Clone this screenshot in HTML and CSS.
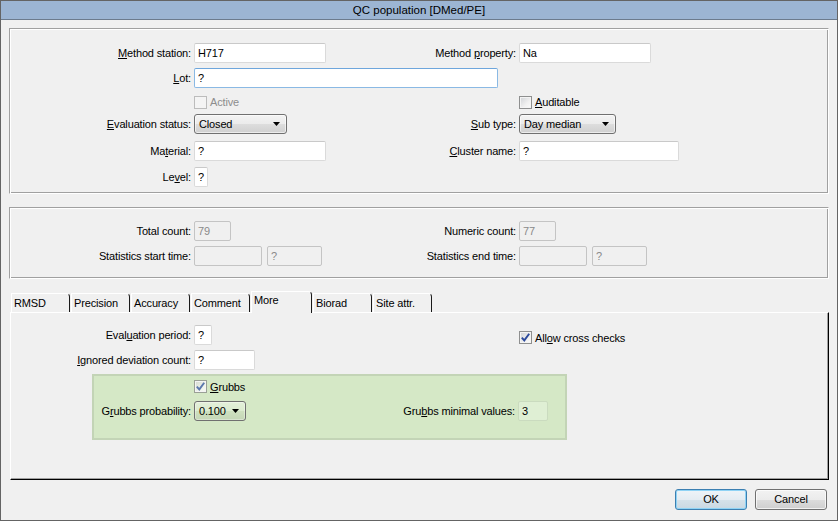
FILE: index.html
```html
<!DOCTYPE html>
<html>
<head>
<meta charset="utf-8">
<title>QC population [DMed/PE]</title>
<link rel="stylesheet" href="styles.css">
</head>
<body>
<div class="window">
  <div class="titlebar">QC population [DMed/PE]</div>
  <div class="client">

    <div class="panel panel-main">
      <div class="grid grid-main">
        <span class="lbl"><u>M</u>ethod station:</span>
        <span class="inp w132">H717</span>
        <span class="lbl">Method <u>p</u>roperty:</span>
        <span class="inp w132">Na</span>

        <span class="lbl"><u>L</u>ot:</span>
        <span class="inp focus w304 span3">?</span>

        <span></span>
        <span class="chk disabled"><span class="cb"></span><span>Active</span></span>
        <span></span>
        <span class="chk"><span class="cb"></span><span><u>A</u>uditable</span></span>

        <span class="lbl"><u>E</u>valuation status:</span>
        <span class="select w93"><span>Closed</span><svg class="arrow" width="7" height="4" viewBox="0 0 7 4"><path d="M0 0H7L3.5 4Z" fill="#000"/></svg></span>
        <span class="lbl"><u>S</u>ub type:</span>
        <span class="select w97"><span>Day median</span><svg class="arrow" width="7" height="4" viewBox="0 0 7 4"><path d="M0 0H7L3.5 4Z" fill="#000"/></svg></span>

        <span class="lbl">Ma<u>t</u>erial:</span>
        <span class="inp w132">?</span>
        <span class="lbl"><u>C</u>luster name:</span>
        <span class="inp w160">?</span>

        <span class="lbl">Le<u>v</u>el:</span>
        <span class="inp w14">?</span>
        <span></span>
        <span></span>
      </div>
    </div>

    <div class="panel panel-stats">
      <div class="grid grid-stats">
        <span class="lbl">Total count:</span>
        <span class="inp dis w37">79</span>
        <span class="lbl">Numeric count:</span>
        <span class="inp dis w37">77</span>

        <span class="lbl">Statistics start time:</span>
        <span class="pair"><span class="inp dis w68"></span><span class="inp dis w55">?</span></span>
        <span class="lbl">Statistics end time:</span>
        <span class="pair"><span class="inp dis w68"></span><span class="inp dis w55">?</span></span>
      </div>
    </div>

    <div class="tabs">
      <span class="tab">RMSD</span>
      <span class="tab">Precision</span>
      <span class="tab">Accuracy</span>
      <span class="tab">Comment</span>
      <span class="tab sel">More</span>
      <span class="tab">Biorad</span>
      <span class="tab">Site attr.</span>
    </div>

    <div class="tabpanel">
      <div class="grid grid-tab">
        <span class="lbl">Eval<u>u</u>ation period:</span>
        <span class="inp w18">?</span>
        <span></span>
        <span class="chk"><span class="cb"><svg width="11" height="11" viewBox="0 0 11 11"><path d="M1.8 5.6 L4.3 8.4 L9.2 1.8" fill="none" stroke="#2c4a9c" stroke-width="1.9"/></svg></span><span>All<u>o</u>w cross checks</span></span>

        <span class="lbl"><u>I</u>gnored deviation count:</span>
        <span class="inp w61">?</span>
        <span></span>
        <span></span>
      </div>

      <div class="group">
        <div class="grid grid-group">
          <span></span>
          <span class="chk"><span class="cb cb-soft"><svg width="11" height="11" viewBox="0 0 11 11"><path d="M1.8 5.6 L4.3 8.4 L9.2 1.8" fill="none" stroke="#5b77ad" stroke-width="1.9"/></svg></span><span><u>G</u>rubbs</span></span>
          <span></span>
          <span></span>

          <span class="lbl">G<u>r</u>ubbs probability:</span>
          <span class="select green w52"><span>0.100</span><svg class="arrow" width="7" height="4" viewBox="0 0 7 4"><path d="M0 0H7L3.5 4Z" fill="#000"/></svg></span>
          <span class="lbl">Gru<u>b</u>bs minimal values:</span>
          <span class="inp ginp w30">3</span>
        </div>
      </div>
    </div>

    <div class="buttons">
      <span class="btn default">OK</span>
      <span class="btn">Cancel</span>
    </div>
  </div>
</div>
</body>
</html>
```

FILE: styles.css
```css
* { box-sizing: border-box; }

body {
  margin: 0;
  font-family: "Liberation Sans", Arial, sans-serif;
  font-size: 11px;
  letter-spacing: -0.15px;
  color: #000;
  background: #f0f0f0;
}

u { text-decoration: underline; text-underline-offset: 1px; }

.window {
  width: 838px;
  height: 521px;
  border: 1px solid #646464;
  background: #f0f0f0;
  display: flex;
  flex-direction: column;
  overflow: hidden;
}

.titlebar {
  height: 19px;
  line-height: 18px;
  border-bottom: 1px solid #6c7b8d;
  background: #9cb5d3;
  text-align: center;
  font-size: 11.5px;
  letter-spacing: 0;
  color: #000;
}

.client {
  flex: 1;
  padding: 8px 8px 0 8px;
  display: flex;
  flex-direction: column;
}

.panel {
  border: 1px solid;
  border-color: #a0a0a0 #ffffff #ffffff #a0a0a0;
  box-shadow: inset 1px 1px #ffffff, inset -1px -1px #a0a0a0;
}

.panel-main { height: 166px; padding-top: 14px; }
.panel-stats { height: 72px; margin-top: 13px; padding-top: 13px; }

.grid {
  display: grid;
  column-gap: 3px;
  align-items: start;
}

.grid-main {
  grid-template-columns: 181px 206px 113px 1fr;
  grid-template-rows: 25px 22px 24px 27px 26px 20px;
}

.grid-stats {
  grid-template-columns: 181px 206px 113px 1fr;
  grid-template-rows: 25px 20px;
}

.grid-tab {
  grid-template-columns: 180px 206px 113px 1fr;
  grid-template-rows: 25px 20px;
}

.grid-group {
  grid-template-columns: 97px 206px 112px 47px;
  grid-template-rows: 15px 20px;
  row-gap: 7px;
}

.lbl {
  justify-self: end;
  line-height: 20px;
  white-space: nowrap;
}

.span3 { grid-column: 2 / span 3; }

.inp {
  display: block;
  height: 20px;
  line-height: 18px;
  padding: 0 3px;
  background: #fff;
  border: 1px solid #dadada;
  border-top-color: #c9c9c9;
  border-radius: 2px;
  white-space: nowrap;
  overflow: hidden;
}

.inp.focus {
  border-color: #8ab9e4;
  border-top-color: #6ea6dc;
}

.inp.dis {
  background: #f0f0f0;
  border-color: #c4c4c4;
  color: #8a8a8a;
}

.inp.ginp {
  background: #dfefd4;
  border-color: #cadbbf;
}

.pair { display: flex; gap: 5px; }

.w14 { width: 14px; }
.w18 { width: 18px; }
.w30 { width: 30px; }
.w37 { width: 37px; }
.w52 { width: 52px; }
.w55 { width: 55px; }
.w61 { width: 61px; }
.w68 { width: 68px; }
.w93 { width: 93px; }
.w97 { width: 97px; }
.w132 { width: 132px; }
.w160 { width: 160px; }
.w304 { width: 304px; }

.select {
  display: flex;
  align-items: center;
  justify-content: space-between;
  height: 20px;
  padding: 0 6px 0 4px;
  border: 1px solid #707070;
  border-radius: 3px;
  background: linear-gradient(#f3f3f3 0%, #ebebeb 50%, #dddddd 50%, #d0d0d0 100%);
  box-shadow: inset 0 0 0 1px rgba(255,255,255,0.6);
  white-space: nowrap;
}

.select.green {
  background: linear-gradient(rgba(255,255,255,0.35) 0%, rgba(255,255,255,0.15) 50%, rgba(0,0,0,0.03) 50%, rgba(0,0,0,0.08) 100%);
  box-shadow: inset 0 0 0 1px rgba(255,255,255,0.35);
}

.arrow { flex: none; }

.chk {
  align-self: stretch;
  display: flex;
  align-items: center;
  gap: 3px;
  white-space: nowrap;
}

.cb {
  flex: none;
  display: flex;
  width: 13px;
  height: 13px;
  border: 1px solid #8e8f8f;
  background: linear-gradient(135deg, #cfd2d6 0%, #f0f0f0 60%, #fbfbfb 100%);
  box-shadow: inset 0 0 0 1px #f4f4f4;
}

.cb-soft {
  border-color: #9aa096;
  background: linear-gradient(135deg, #d3d8cf 0%, #eef2ea 60%, #f8faf6 100%);
}

.chk.disabled { color: #8d8d8d; }
.chk.disabled .cb {
  border-color: #bcbcbc;
  background: #f4f4f4;
  box-shadow: none;
}

.tabs {
  display: flex;
  align-items: flex-end;
  height: 19px;
  margin-top: 14px;
  padding-left: 2px;
  gap: 1px;
}

.tab {
  width: 59px;
  height: 19px;
  padding-left: 2px;
  line-height: 19px;
  border-top: 1px solid #ffffff;
  border-left: 1px solid #ffffff;
  border-right: 1px solid #1a1a1a;
  border-top-right-radius: 4px;
  background: #f0f0f0;
  white-space: nowrap;
}

.tab.sel {
  height: 22px;
  margin-bottom: -1px;
  line-height: 17px;
  position: relative;
  z-index: 1;
  width: 61px;
}

.tabpanel {
  margin-left: 1px;
  height: 168px;
  padding-top: 12px;
  border: 1px solid;
  border-color: #ffffff #000000 #000000 #ffffff;
  box-shadow: inset -1px -1px #a0a0a0;
}

.group {
  margin-top: 4px;
  margin-left: 81px;
  width: 475px;
  height: 66px;
  padding-top: 3px;
  border: 2px solid #c3d4b6;
  background: #d5e8c6;
}

.buttons {
  display: flex;
  justify-content: flex-end;
  gap: 8px;
  margin-top: 9px;
  padding-right: 2px;
}

.btn {
  width: 72px;
  height: 21px;
  line-height: 19px;
  text-align: center;
  border: 1px solid #707070;
  border-radius: 3px;
  background: linear-gradient(#f2f2f2 0%, #ebebeb 50%, #dddddd 50%, #cfcfcf 100%);
  box-shadow: inset 0 0 0 1px rgba(255,255,255,0.7);
}

.btn.default {
  border-color: #3c7fb1;
  background: linear-gradient(#eef4f8 0%, #e4ecf2 50%, #d6e2ea 50%, #c9d8e2 100%);
  box-shadow: inset 0 0 0 1px #8fd3f5;
}
```
